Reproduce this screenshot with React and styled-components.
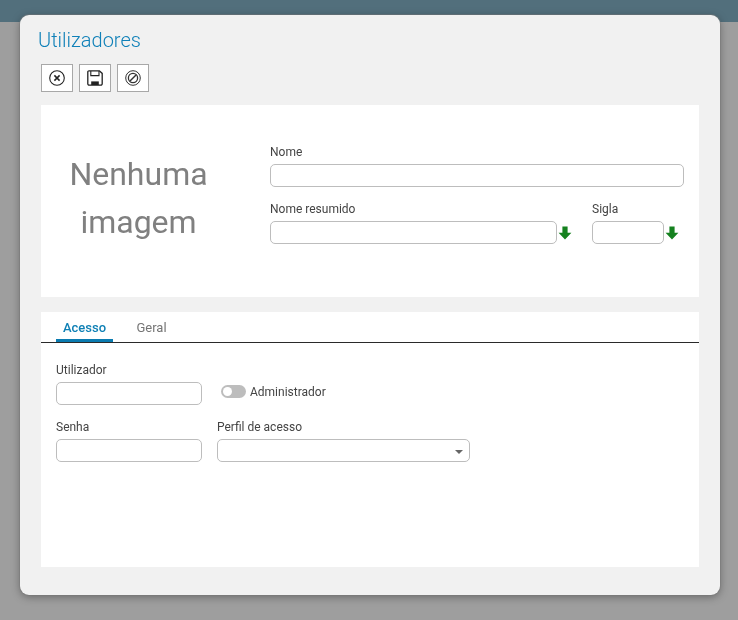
import React from 'react';
import styled, { createGlobalStyle } from 'styled-components';

const Global = createGlobalStyle`
  html, body {
    margin: 0;
    padding: 0;
    background: #9e9e9e;
    font-family: Roboto, "Liberation Sans", sans-serif;
  }
`;

const Page = styled.div`
  position: relative;
  width: 738px;
  height: 620px;
  overflow: hidden;
  background: #9e9e9e;
`;

const TopBar = styled.div`
  height: 22px;
  background: #526f7c;
`;

const Dialog = styled.div`
  position: absolute;
  left: 20px;
  top: 15px;
  width: 700px;
  height: 580px;
  box-sizing: border-box;
  padding: 0 21px;
  display: flex;
  flex-direction: column;
  background: #f1f1f1;
  border-radius: 9px;
  box-shadow: 0 0 0 1px rgba(120, 120, 120, 0.45), 0 2px 9px rgba(0, 0, 0, 0.35);
  will-change: transform;
`;

const Title = styled.h1`
  margin: 0 0 0 -3px;
  padding-top: 13px;
  height: 36px;
  font-size: 20px;
  line-height: 24px;
  font-weight: 300;
  color: #0f80b8;
`;

const Toolbar = styled.div`
  display: flex;
  gap: 6px;
  height: 28px;
  margin-bottom: 13px;
`;

const ToolButton = styled.button`
  width: 32px;
  height: 28px;
  box-sizing: border-box;
  padding: 0;
  display: flex;
  align-items: center;
  justify-content: center;
  background: #fff;
  border: 1px solid #a8a8a8;
`;

const HeadCard = styled.section`
  height: 192px;
  display: flex;
  background: #fff;
`;

const ImageHolder = styled.div`
  width: 195px;
  margin-top: 45px;
  text-align: center;
  font-size: 32px;
  line-height: 48px;
  color: #808080;
`;

const HeadFields = styled.div`
  margin-left: 34px;
  padding-top: 39px;
  width: 414px;
  display: flex;
  flex-direction: column;
  gap: 14px;
`;

const Row = styled.div`
  display: flex;
  align-items: flex-start;
  gap: ${(p) => p.$gap || 0}px;
`;

const Field = styled.div`
  display: flex;
  flex-direction: column;
`;

const Label = styled.label`
  height: 20px;
  font-size: 12px;
  line-height: 16px;
  color: #444;
`;

const InputLine = styled.div`
  display: flex;
  align-items: center;
  gap: 1px;
`;

const Input = styled.div`
  position: relative;
  box-sizing: border-box;
  width: ${(p) => p.$width}px;
  height: 23px;
  background: #fff;
  border: 1px solid #bdbdbd;
  border-radius: 5px;
`;

const SelectCaret = styled.span`
  position: absolute;
  right: 6px;
  top: 10px;
  width: 0;
  height: 0;
  border-left: 4px solid transparent;
  border-right: 4px solid transparent;
  border-top: 4px solid #666;
`;

const TabCard = styled.section`
  margin-top: 15px;
  height: 255px;
  background: #fff;
`;

const Tabs = styled.div`
  height: 30px;
  padding-left: 15px;
  display: flex;
  border-bottom: 1px solid #2a2a2a;
`;

const Tab = styled.div`
  width: ${(p) => p.$width}px;
  box-sizing: border-box;
  margin-right: ${(p) => p.$gap || 0}px;
  height: 30px;
  text-align: center;
  font-size: 13px;
  line-height: 31px;
  font-weight: ${(p) => (p.$active ? 500 : 400)};
  color: ${(p) => (p.$active ? '#0f80b5' : '#757575')};
  border-bottom: ${(p) => (p.$active ? '3px solid #0a7bb0' : 'none')};
`;

const TabBody = styled.div`
  padding: 19px 15px 0;
  display: flex;
  flex-direction: column;
  gap: 14px;
`;

const Toggle = styled.div`
  display: flex;
  align-items: center;
  gap: 4px;
  margin: 18px 0 0 19px;
  height: 23px;
  font-size: 12px;
  color: #444;
`;

const ToggleTrack = styled.span`
  position: relative;
  width: 25px;
  height: 13px;
  border-radius: 7px;
  background: #bdbdbd;
`;

const ToggleKnob = styled.span`
  position: absolute;
  left: 2px;
  top: 2px;
  width: 9px;
  height: 9px;
  border-radius: 50%;
  background: #fff;
`;

const CancelIcon = () => (
  <svg width="16" height="16" viewBox="0 0 16 16" fill="none" stroke="#222">
    <circle cx="8" cy="8" r="7.3" strokeWidth="1.1" />
    <path d="M5.4 5.4l5.2 5.2M10.6 5.4l-5.2 5.2" strokeWidth="1.5" />
  </svg>
);

const SaveIcon = () => (
  <svg width="16" height="16" viewBox="0 0 16 16" fill="none" stroke="#222">
    <path d="M2 0.8H12.4L15.2 3.4V13.8A1.4 1.4 0 0 1 13.8 15.2H2.2A1.4 1.4 0 0 1 0.8 13.8V2A1.2 1.2 0 0 1 2 0.8Z" strokeWidth="1.3" />
    <path d="M3.8 1V5.6H12V1" strokeWidth="1.1" />
    <rect x="4.2" y="11.4" width="7.6" height="3.6" fill="#222" stroke="none" />
  </svg>
);

const BlockIcon = () => (
  <svg width="16" height="16" viewBox="0 0 16 16" fill="none" stroke="#333">
    <circle cx="8" cy="8" r="7.3" strokeWidth="1" />
    <circle cx="8" cy="8" r="4.6" strokeWidth="1.3" />
    <path d="M5 11l6-6" strokeWidth="1.4" />
  </svg>
);

const DownArrow = () => (
  <svg width="14" height="14" viewBox="0 0 14 14" fill="#15811f">
    <path d="M4.4 0.6H9.6V6.8H13.4L7 13.4L0.6 6.8H4.4Z" />
  </svg>
);

export default function App() {
  return (
    <Page>
      <Global />
      <TopBar />
      <Dialog>
        <Title>Utilizadores</Title>
        <Toolbar>
          <ToolButton><CancelIcon /></ToolButton>
          <ToolButton><SaveIcon /></ToolButton>
          <ToolButton><BlockIcon /></ToolButton>
        </Toolbar>
        <HeadCard>
          <ImageHolder>Nenhuma imagem</ImageHolder>
          <HeadFields>
            <Field>
              <Label>Nome</Label>
              <Input $width={414} />
            </Field>
            <Row $gap={20}>
              <Field>
                <Label>Nome resumido</Label>
                <InputLine>
                  <Input $width={287} />
                  <DownArrow />
                </InputLine>
              </Field>
              <Field>
                <Label>Sigla</Label>
                <InputLine>
                  <Input $width={72} />
                  <DownArrow />
                </InputLine>
              </Field>
            </Row>
          </HeadFields>
        </HeadCard>
        <TabCard>
          <Tabs>
            <Tab $active $width={57} $gap={10}>Acesso</Tab>
            <Tab $width={57}>Geral</Tab>
          </Tabs>
          <TabBody>
            <Row>
              <Field>
                <Label>Utilizador</Label>
                <Input $width={146} />
              </Field>
              <Toggle>
                <ToggleTrack><ToggleKnob /></ToggleTrack>
                Administrador
              </Toggle>
            </Row>
            <Row $gap={15}>
              <Field>
                <Label>Senha</Label>
                <Input $width={146} />
              </Field>
              <Field>
                <Label>Perfil de acesso</Label>
                <Input $width={253}><SelectCaret /></Input>
              </Field>
            </Row>
          </TabBody>
        </TabCard>
      </Dialog>
    </Page>
  );
}
